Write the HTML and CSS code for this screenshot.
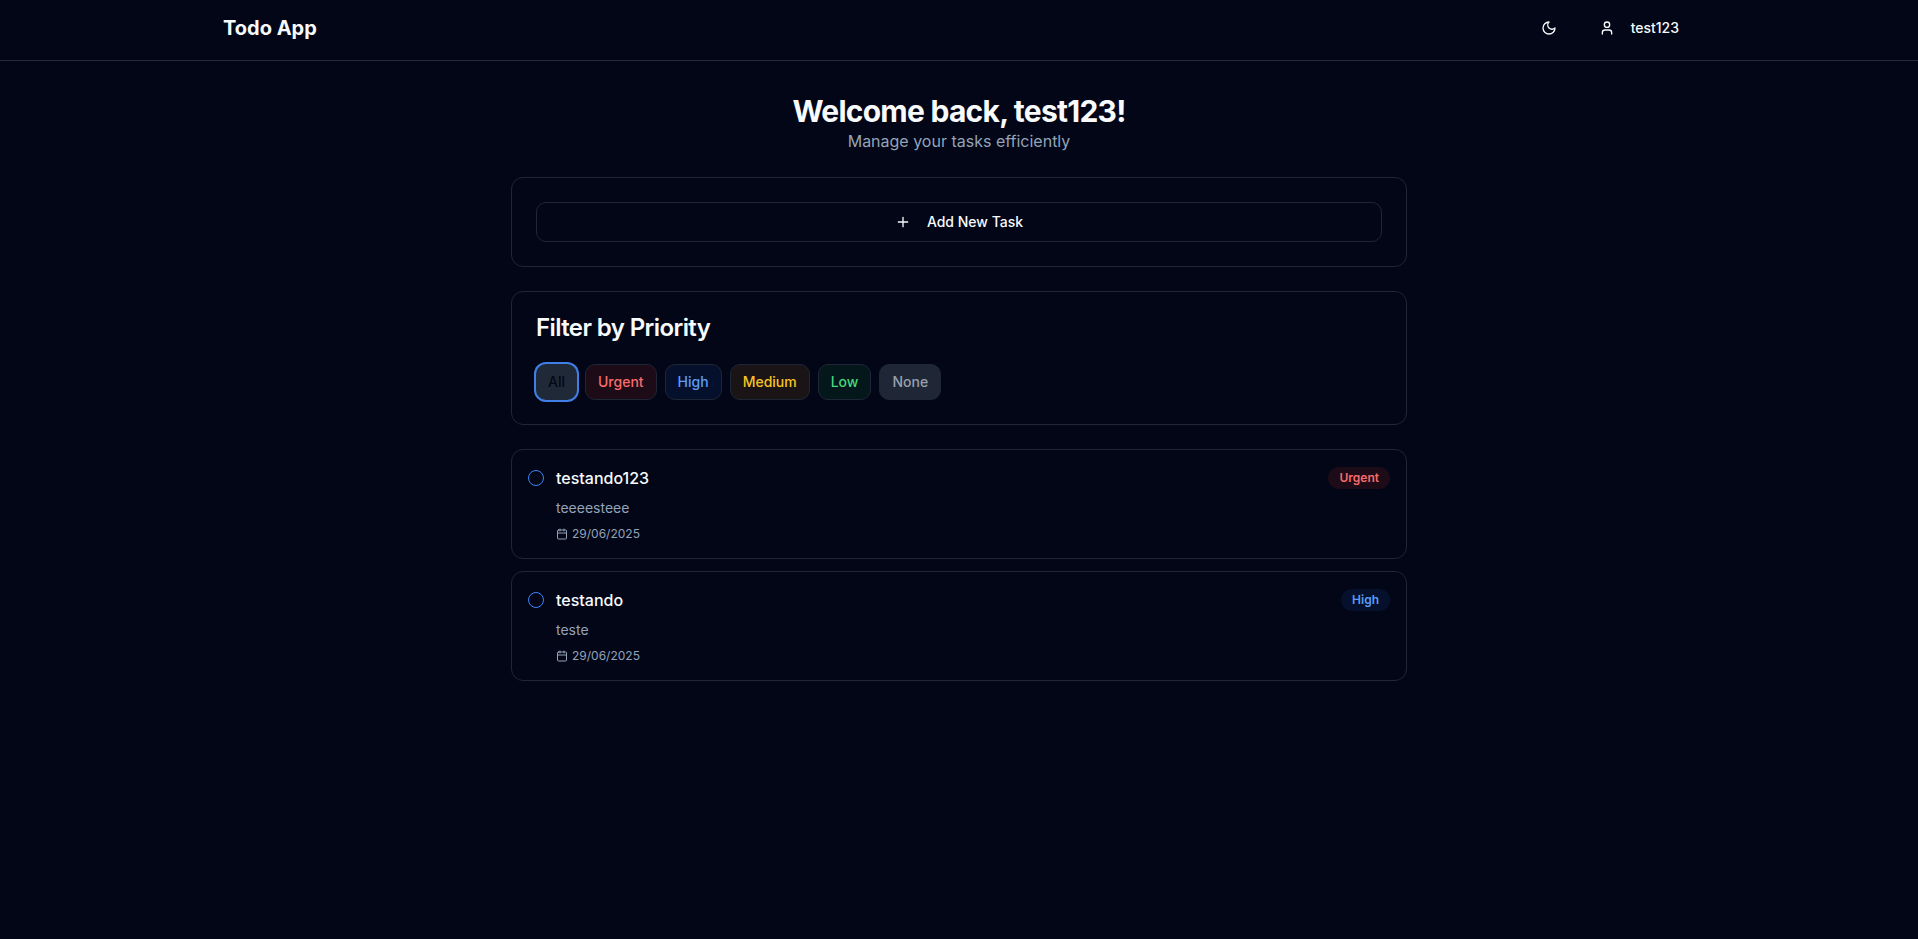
FILE: index.html
```html
<!DOCTYPE html>
<html lang="en">
<head>
<meta charset="utf-8">
<title>Todo App</title>
<link rel="stylesheet" href="styles.css">
</head>
<body>
<header class="header">
  <div class="header-inner">
    <div class="brand">Todo App</div>
    <div class="actions">
      <button class="theme-btn" aria-label="Toggle theme">
        <svg class="icon" viewBox="0 0 24 24"><path d="M12 3a6 6 0 0 0 9 9 9 9 0 1 1-9-9Z"/></svg>
      </button>
      <button class="user-btn">
        <svg class="icon" viewBox="0 0 24 24"><path d="M19 21v-2a4 4 0 0 0-4-4H9a4 4 0 0 0-4 4v2"/><circle cx="12" cy="7" r="4"/></svg>
        <span>test123</span>
      </button>
    </div>
  </div>
</header>
<main class="main">
  <div class="welcome">
    <h1 class="title">Welcome back, test123!</h1>
    <p class="subtitle">Manage your tasks efficiently</p>
  </div>
  <section class="card">
    <button class="add-btn">
      <svg class="icon" viewBox="0 0 24 24"><path d="M5 12h14M12 5v14"/></svg>
      <span>Add New Task</span>
    </button>
  </section>
  <section class="card">
    <h2 class="card-title">Filter by Priority</h2>
    <div class="filters">
      <button class="chip all">All</button>
      <button class="chip urgent">Urgent</button>
      <button class="chip high">High</button>
      <button class="chip medium">Medium</button>
      <button class="chip low">Low</button>
      <button class="chip none">None</button>
    </div>
  </section>
  <section class="tasks">
    <article class="task">
      <span class="check"></span>
      <div class="task-body">
        <h3 class="task-title">testando123</h3>
        <p class="task-desc">teeeesteee</p>
        <div class="task-date">
          <svg class="icon-sm" viewBox="0 0 24 24"><path d="M8 2v4M16 2v4M3 10h18"/><rect width="18" height="18" x="3" y="4" rx="2"/></svg>
          <span>29/06/2025</span>
        </div>
      </div>
      <span class="badge urgent">Urgent</span>
    </article>
    <article class="task">
      <span class="check"></span>
      <div class="task-body">
        <h3 class="task-title">testando</h3>
        <p class="task-desc">teste</p>
        <div class="task-date">
          <svg class="icon-sm" viewBox="0 0 24 24"><path d="M8 2v4M16 2v4M3 10h18"/><rect width="18" height="18" x="3" y="4" rx="2"/></svg>
          <span>29/06/2025</span>
        </div>
      </div>
      <span class="badge high">High</span>
    </article>
  </section>
</main>
</body>
</html>
```
FILE: styles.css
```css
* { box-sizing: border-box; margin: 0; padding: 0; }
body {
  min-height: 100vh;
  background: #020617;
  color: #f8fafc;
  font-family: Inter, "Liberation Sans", sans-serif;
  font-size: 16px;
  line-height: 24px;
}
button { font: inherit; color: inherit; background: none; border: 0; }
svg { fill: none; stroke: currentColor; stroke-width: 2; stroke-linecap: round; stroke-linejoin: round; flex: none; }
.icon { width: 16px; height: 16px; }
.icon-sm { width: 12px; height: 12px; }
.header { border-bottom: 1px solid #232a39; }
.header-inner {
  max-width: 1536px;
  margin: 0 auto;
  padding: 8px 32px 12px;
  display: flex;
  align-items: center;
  justify-content: space-between;
}
.brand { font-size: 20px; line-height: 28px; font-weight: 700; }
.actions { display: flex; align-items: center; gap: 14px; }
.theme-btn { width: 40px; height: 40px; display: grid; place-items: center; }
.user-btn {
  height: 40px;
  padding: 0 16px;
  display: flex;
  align-items: center;
  gap: 16px;
  font-size: 14px;
  font-weight: 500;
}
.main { max-width: 896px; margin: 0 auto; padding-top: 32px; display: flex; flex-direction: column; gap: 24px; }
.welcome { text-align: center; }
.title { font-size: 30px; line-height: 36px; font-weight: 700; letter-spacing: -0.025em; }
.subtitle { color: #94a3b8; }
.card { border: 1px solid #1f2635; border-radius: 12px; padding: 24px; }
.add-btn {
  width: 100%;
  height: 40px;
  border: 1px solid #1f2635;
  border-radius: 10px;
  display: flex;
  align-items: center;
  justify-content: center;
  gap: 16px;
  font-size: 14px;
  font-weight: 500;
}
.card-title { font-size: 24px; line-height: 24px; font-weight: 600; letter-spacing: -0.025em; margin-bottom: 24px; }
.filters { display: flex; gap: 8px; }
.chip { height: 36px; padding: 0 12px; border: 1px solid #1f2635; border-radius: 10px; font-size: 14px; font-weight: 500; }
.urgent { background: #1d0b17; color: #f86b6b; }
.high { background: #05112c; color: #5c9cf5; }
.medium { background: #1b1416; color: #f6c324; }
.low { background: #04171b; color: #47da7d; }
.none { background: #1f2736; color: #98a0ae; }
.chip.all { border: 0; background: #1f2937; color: #030816; box-shadow: 0 0 0 2px #3f7fe6; }
.tasks { display: flex; flex-direction: column; gap: 12px; }
.task { border: 1px solid #1f2635; border-radius: 12px; padding: 16px; display: flex; align-items: flex-start; }
.check { width: 16px; height: 16px; margin: 4px 12px 0 0; border: 1px solid #3b82f6; border-radius: 50%; }
.task-body { flex: 1; display: flex; flex-direction: column; gap: 8px; }
.task-title { font-size: 16px; line-height: 24px; font-weight: 500; }
.task-desc { font-size: 14px; line-height: 20px; color: #94a3b8; }
.task-date { display: flex; align-items: center; gap: 4px; font-size: 12px; line-height: 16px; color: #94a3b8; }
.badge { height: 22px; margin-top: 1px; padding: 3px 11px; border-radius: 11px; font-size: 12px; line-height: 16px; font-weight: 600; }
```
